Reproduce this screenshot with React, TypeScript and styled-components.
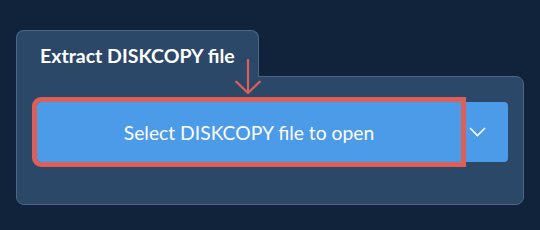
import React from "react";
import styled, { createGlobalStyle } from "styled-components";

const Global = createGlobalStyle`
  html, body { margin: 0; padding: 0; background: #11233a; }
  body { font-family: Lato, "Open Sans", sans-serif; }
`;

const Page = styled.div`
  width: 540px;
  height: 230px;
  padding: 30px 0 0 16px;
  box-sizing: border-box;
`;

const Group = styled.div`
  position: relative;
  width: 508px;
  display: flex;
  flex-direction: column;
  align-items: flex-start;
`;

const Tab = styled.div`
  position: relative;
  z-index: 1;
  width: 243px;
  height: 47px;
  box-sizing: border-box;
  margin-bottom: -1px;
  padding: 13px 0 0 23px;
  background: #2c4868;
  border: 1px solid #4b6686;
  border-bottom: none;
  border-radius: 8px 8px 0 0;
  color: #ffffff;
  font-weight: 700;
  font-size: 19.5px;
  line-height: 24px;
  white-space: nowrap;
`;

const Panel = styled.div`
  width: 508px;
  box-sizing: border-box;
  background: #2c4868;
  border: 1px solid #4b6686;
  border-radius: 0 8px 8px 8px;
  padding: 25px 15px 42px 20px;
`;

const ButtonRow = styled.div`
  display: flex;
  height: 60px;
`;

const MainButton = styled.button`
  position: relative;
  z-index: 1;
  flex: 1;
  border: none;
  margin: 0;
  background: #4c9be8;
  color: #ffffff;
  font-family: Lato, "Open Sans", sans-serif;
  font-size: 19.3px;
  font-weight: 400;
  border-radius: 4px 0 0 4px;
  outline: 5px solid #dd5f5a;
  padding: 0;
  cursor: pointer;
`;

const DropButton = styled.button`
  width: 47px;
  border: none;
  margin: 0;
  background: #4c9be8;
  border-radius: 0 4px 4px 0;
  display: flex;
  align-items: center;
  justify-content: flex-start;
  padding: 0 0 0 8px;
  cursor: pointer;
`;

const Arrow = styled.svg`
  position: absolute;
  left: 218px;
  top: 28px;
  z-index: 2;
`;

export default function App() {
  return (
    <>
      <Global />
      <Page>
        <Group>
          <Tab>Extract DISKCOPY file</Tab>
          <Panel>
            <ButtonRow>
              <MainButton>Select DISKCOPY file to open</MainButton>
              <DropButton aria-label="more">
                <svg width="17" height="10" viewBox="0 0 17 10">
                  <polyline points="1,1 8.5,8.5 16,1" fill="none" stroke="#ffffff" strokeWidth="1.6" />
                </svg>
              </DropButton>
            </ButtonRow>
          </Panel>
          <Arrow width="28" height="38" viewBox="0 0 28 38">
            <line x1="14" y1="1" x2="14" y2="35" stroke="#dd5f5a" strokeWidth="2.2" />
            <polyline points="1.5,23 14,35 26.5,23" fill="none" stroke="#dd5f5a" strokeWidth="2.2" />
          </Arrow>
        </Group>
      </Page>
    </>
  );
}
